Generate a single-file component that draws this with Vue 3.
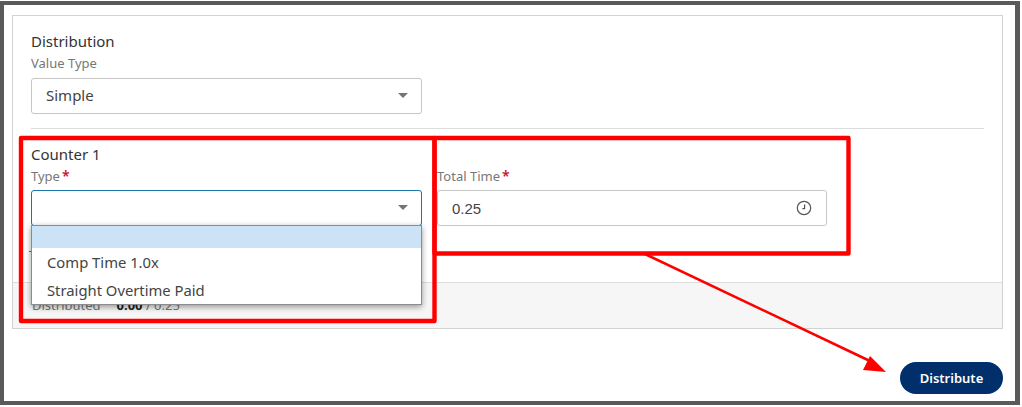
<script setup>
const options = ['Comp Time 1.0x', 'Straight Overtime Paid']
</script>

<template>
  <div class="page">
    <main class="frame">
      <section class="card">
        <div class="body">
          <h2 class="title">Distribution</h2>
          <label class="label">Value Type</label>
          <div class="control select-one">
            <span>Simple</span>
            <i class="caret"></i>
          </div>
          <hr class="rule" />
          <h2 class="title counter">Counter 1</h2>
          <div class="fields">
            <div class="field">
              <label class="label">Type<b>*</b></label>
              <div class="control focused">
                <span></span>
                <i class="caret"></i>
              </div>
              <ul class="menu">
                <li class="active"></li>
                <li v-for="o in options" :key="o">{{ o }}</li>
              </ul>
            </div>
            <div class="field">
              <label class="label total">Total Time<b>*</b></label>
              <div class="control time">
                <span>0.25</span>
                <svg width="16" height="16" viewBox="0 0 16 16" fill="none" stroke="#555" stroke-width="1.2">
                  <circle cx="8" cy="8" r="6.7" />
                  <path d="M8.6 4.6V8.7H6.4" />
                </svg>
              </div>
            </div>
          </div>
          <i class="add-mark"></i>
        </div>
        <footer class="summary">
          <span>Distributed</span>
          <span class="amount"><b>0.00</b> / 0.25</span>
        </footer>
      </section>
      <div class="actions">
        <button class="primary">Distribute</button>
      </div>
    </main>
    <svg class="notes" width="1022" height="407" viewBox="0 0 1022 407" fill="none">
      <rect x="21" y="138" width="413.5" height="183" stroke="#ff0000" stroke-width="4.4" stroke-linejoin="round" />
      <rect x="434.5" y="138" width="414" height="115.5" stroke="#ff0000" stroke-width="4.4" stroke-linejoin="round" />
      <path d="M645 254 L872 362" stroke="#ff0000" stroke-width="2.6" />
      <path d="M886 372 L863 370 L870 356 Z" fill="#ff0000" />
    </svg>
  </div>
</template>

<style>
html, body { margin: 0; background: #fff; }
</style>

<style scoped>
.page {
  position: relative;
  width: 1022px;
  height: 407px;
  padding: 1px 2px 2px 0;
  box-sizing: border-box;
  overflow: hidden;
  font-family: "Noto Sans", "Open Sans", sans-serif;
  background: #fff;
}
.frame {
  height: 100%;
  box-sizing: border-box;
  border: 4px solid #5a5a5a;
  border-right-width: 5px;
  padding: 10px 12px 0 8px;
  display: flex;
  flex-direction: column;
}
.card {
  height: 314px;
  box-sizing: border-box;
  border: 1px solid #d2d2d2;
  display: flex;
  flex-direction: column;
}
.body {
  flex: 1;
  padding: 15px 18px 0;
  position: relative;
}
.title {
  margin: 0;
  font-size: 15px;
  line-height: 20px;
  font-weight: 400;
  color: #333;
}
.label {
  display: block;
  margin-top: 3px;
  font-size: 13px;
  line-height: 18px;
  color: #777;
}
.label b {
  margin-left: 2px;
  color: #c8102e;
  font-weight: 600;
  font-size: 14px;
  line-height: 12px;
}
.control {
  width: 100%;
  height: 36px;
  box-sizing: border-box;
  border: 1px solid #c6c6c6;
  border-radius: 3px;
  background: #fff;
  padding: 0 13px 0 14px;
  display: flex;
  align-items: center;
  justify-content: space-between;
  font-size: 15px;
  color: #444;
}
.select-one { width: 390.5px; margin-top: 6px; padding-bottom: 2px; }
.focused { border-color: #1a76a8; border-width: 1.5px; padding-bottom: 1px; }
.caret {
  width: 0;
  height: 0;
  border-left: 5.5px solid transparent;
  border-right: 5.5px solid transparent;
  border-top: 5.5px solid #757575;
}
.rule {
  margin: 14px 0 0;
  width: 953px;
  border: 0;
  border-top: 1px solid #dcdcdc;
}
.counter { margin-top: 15px; }
.fields {
  display: grid;
  grid-template-columns: 390.5px 390px;
  column-gap: 15.5px;
}
.field { position: relative; }
.field .label { margin-bottom: 5px; margin-top: 3px; }
.time { padding-right: 14px; font-family: "Liberation Sans", sans-serif; }
.menu {
  position: absolute;
  z-index: 2;
  left: 0;
  top: 61px;
  width: 100%;
  box-sizing: border-box;
  margin: 0;
  padding: 0;
  list-style: none;
  background: #fff;
  border: 1px solid #8c8c8c;
  box-shadow: 0 2px 6px rgba(0, 0, 0, 0.4);
  font-size: 14.8px;
  color: #444;
}
.menu li {
  height: 28px;
  line-height: 28px;
  padding-left: 15px;
}
.menu .active { height: 22px; background: #cce3f7; }
.add-mark {
  position: absolute;
  left: 16px;
  top: 235px;
  width: 3px;
  height: 1px;
  background: #1a76a8;
}
.summary {
  height: 46px;
  box-sizing: border-box;
  background: #f6f6f6;
  border-top: 1px solid #dcdcdc;
  padding: 13px 0 0 19px;
  display: flex;
  font-size: 13px;
  line-height: 18px;
  color: #777;
}
.amount { margin-left: 16px; }
.amount b { color: #222; }
.actions {
  display: flex;
  justify-content: flex-end;
  margin-top: 33px;
}
.primary {
  width: 103px;
  height: 32px;
  border: 0;
  border-radius: 16px;
  background: #002f6c;
  color: #fff;
  font: 600 13px "Noto Sans", sans-serif;
  padding: 0;
}
.notes {
  position: absolute;
  left: 0;
  top: 0;
  pointer-events: none;
}
</style>
